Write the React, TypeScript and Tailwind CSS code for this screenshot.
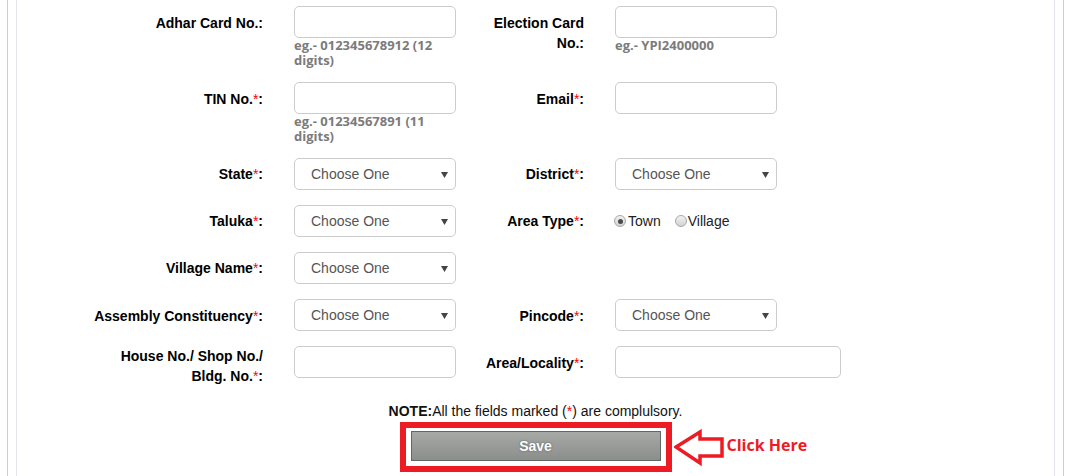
import React from "react";

const Req = () => <span className="text-[#ff0000] font-normal">*</span>;

const Label = ({ children, w, pt = "pt-[7px]" }: { children: React.ReactNode; w: string; pt?: string }) => (
  <div className={`${w} ${pt} shrink-0 text-right text-[14px] leading-[20px] font-bold text-black`}>{children}</div>
);

const TextInput = ({ w = "w-[162px]" }: { w?: string }) => (
  <div className={`${w} h-[32px] rounded-[5px] border border-[#cccccc] bg-white`} />
);

const Hint = ({ children }: { children: React.ReactNode }) => (
  <div
    className="w-[162px] text-[13px] leading-[15px] font-bold text-[#7b7b7b]"
    style={{ fontFamily: '"Open Sans", sans-serif' }}
  >
    {children}
  </div>
);

const Select = () => (
  <div className="relative w-[162px] h-[32px] rounded-[5px] border border-[#cccccc] bg-white flex items-center pl-[16px] text-[14px] text-[#555555]">
    Choose One
    <svg className="absolute right-[7px] top-[13px]" width="7" height="6" viewBox="0 0 7 6">
      <polygon points="0,0 7,0 3.5,6" fill="#444444" />
    </svg>
  </div>
);

const Radio = ({ checked }: { checked?: boolean }) => (
  <span className="w-[12px] h-[12px] rounded-full border border-[#a8a8a8] bg-gradient-to-b from-[#f2f2f2] to-[#d2d2d2] flex items-center justify-center">
    {checked && <span className="w-[5px] h-[5px] rounded-full bg-[#4a4a4a]" />}
  </span>
);

export default function App() {
  return (
    <div
      className="w-[1072px] h-[476px] bg-white pl-[7px] pr-[8px] overflow-hidden"
      style={{ fontFamily: '"Liberation Sans", Arial, sans-serif' }}
    >
      <div className="h-full border-x border-[#cdcdcd] px-[8px]">
        <div className="h-full border-x border-[#e2e5ee] pt-[6px]">
          {/* Row 1 */}
          <div className="flex pl-[68px] h-[76px]">
            <Label w="w-[178px]">Adhar Card No.:</Label>
            <div className="ml-[31px] w-[180px]">
              <TextInput />
              <Hint>eg.- 012345678912 (12 digits)</Hint>
            </div>
            <Label w="w-[110px]">Election Card No.:</Label>
            <div className="ml-[31px]">
              <TextInput />
              <Hint>eg.- YPI2400000</Hint>
            </div>
          </div>
          {/* Row 2 */}
          <div className="flex pl-[68px] h-[76px]">
            <Label w="w-[178px]">
              TIN No.<Req />:
            </Label>
            <div className="ml-[31px] w-[180px]">
              <TextInput />
              <Hint>eg.- 01234567891 (11 digits)</Hint>
            </div>
            <Label w="w-[110px]">
              Email<Req />:
            </Label>
            <div className="ml-[31px]">
              <TextInput />
            </div>
          </div>
          {/* Row 3 */}
          <div className="flex pl-[68px] h-[47px]">
            <Label w="w-[178px]" pt="pt-[6px]">
              State<Req />:
            </Label>
            <div className="ml-[31px] w-[180px]">
              <Select />
            </div>
            <Label w="w-[110px]" pt="pt-[6px]">
              District<Req />:
            </Label>
            <div className="ml-[31px]">
              <Select />
            </div>
          </div>
          {/* Row 4 */}
          <div className="flex pl-[68px] h-[47px]">
            <Label w="w-[178px]" pt="pt-[6px]">
              Taluka<Req />:
            </Label>
            <div className="ml-[31px] w-[180px]">
              <Select />
            </div>
            <Label w="w-[110px]" pt="pt-[6px]">
              Area Type<Req />:
            </Label>
            <div className="ml-[30px] h-[32px] flex items-center text-[14px] text-[#222222]">
              <Radio checked />
              <span className="ml-[2px]">Town</span>
              <span className="ml-[14px]">
                <Radio />
              </span>
              <span className="ml-[1px]">Village</span>
            </div>
          </div>
          {/* Row 5 */}
          <div className="flex pl-[68px] h-[47px]">
            <Label w="w-[178px]" pt="pt-[6px]">
              Village Name<Req />:
            </Label>
            <div className="ml-[31px] w-[180px]">
              <Select />
            </div>
          </div>
          {/* Row 6 */}
          <div className="flex pl-[68px] h-[47px]">
            <Label w="w-[178px]" pt="pt-[7px]">
              Assembly Constituency<Req />:
            </Label>
            <div className="ml-[31px] w-[180px]">
              <Select />
            </div>
            <Label w="w-[110px]" pt="pt-[7px]">
              Pincode<Req />:
            </Label>
            <div className="ml-[31px]">
              <Select />
            </div>
          </div>
          {/* Row 7 */}
          <div className="flex pl-[68px] h-[57px]">
            <Label w="w-[178px]" pt="pt-0">
              House No./ Shop No./ Bldg. No.<Req />:
            </Label>
            <div className="ml-[31px] w-[180px]">
              <TextInput />
            </div>
            <Label w="w-[110px]" pt="pt-[7px]">
              Area/Locality<Req />:
            </Label>
            <div className="ml-[31px]">
              <TextInput w="w-[226px]" />
            </div>
          </div>
          {/* Note */}
          <div className="text-center text-[14px] leading-[16px] text-[#111111]">
            <span className="font-bold">NOTE:</span>All the fields marked (<Req />) are complulsory.
          </div>
          {/* Save */}
          <div className="flex justify-center mt-[3px]">
            <div className="relative border-[6px] border-[#ed1c24] pt-[3px] px-[5px] pb-[5px]">
              <button
                className="w-[250px] h-[30px] border border-[#5b6a62] bg-gradient-to-b from-[#a6a9a6] to-[#8b8e8b] text-white text-[14px] font-bold"
                style={{ textShadow: "0 0 2px #555" }}
              >
                Save
              </button>
              <div className="absolute left-[268px] top-[1px] flex items-center whitespace-nowrap">
                <svg width="52" height="38" viewBox="0 0 52 38">
                  <polygon
                    points="2,18 26,3 26,10 48,10 48,27 26,27 26,34"
                    fill="white"
                    stroke="#ed1c24"
                    strokeWidth="3.5"
                    strokeLinejoin="miter"
                  />
                </svg>
                <span
                  className="ml-[1px] pb-[6px] text-[16px] font-bold text-[#ed1c24] leading-[20px] whitespace-nowrap"
                  style={{ fontFamily: '"Open Sans", sans-serif' }}
                >
                  Click Here
                </span>
              </div>
            </div>
          </div>
        </div>
      </div>
    </div>
  );
}
